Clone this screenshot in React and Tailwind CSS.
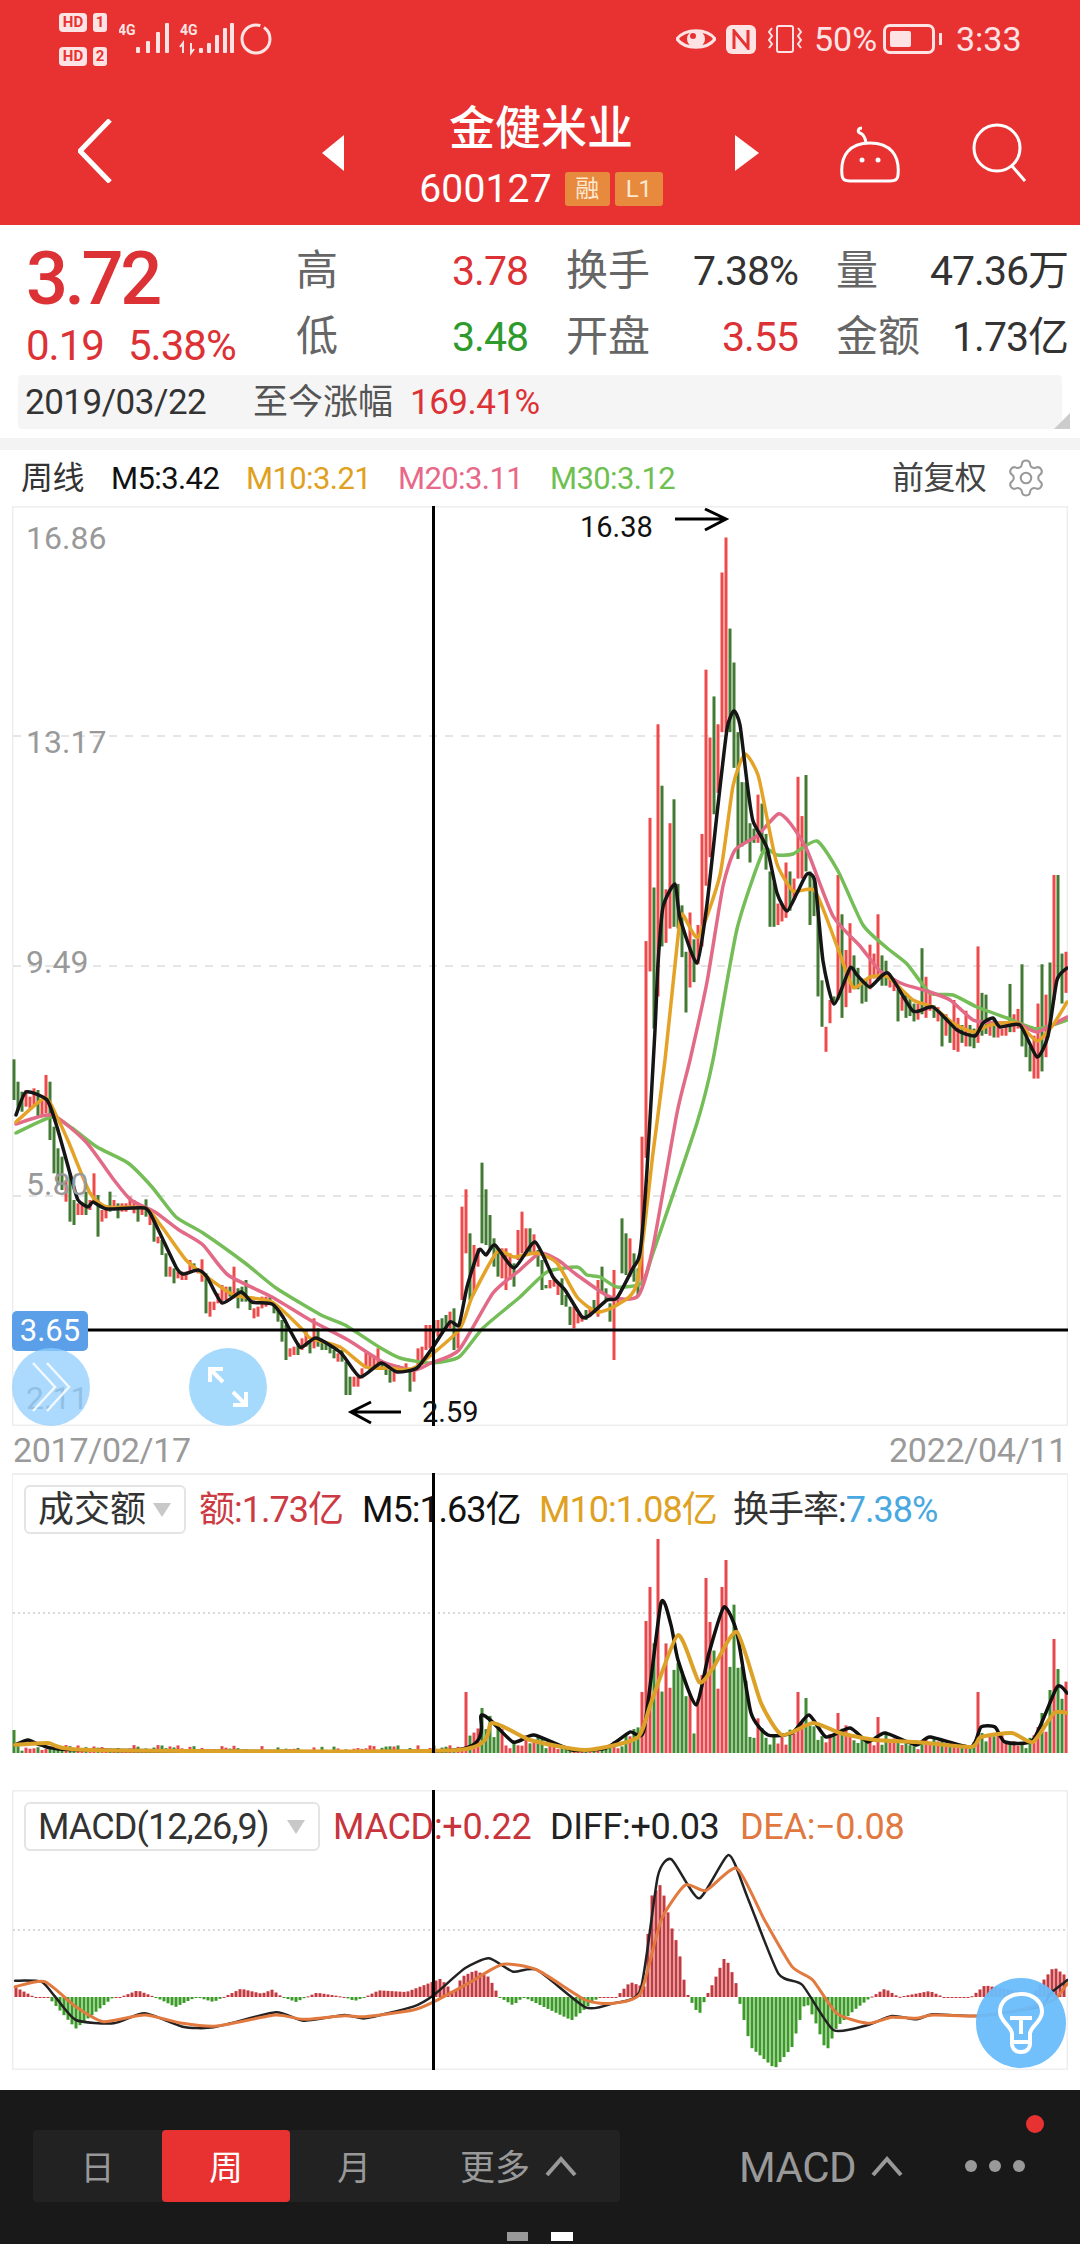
import { Settings } from 'lucide-react';

// candle data, read off the chart: colour + top-bottom, in crop units
const LEFT = 'G178-300 G245-330 G275-335 R270-320 R290-325 R265-315 G270-350 R300-345 R225-340 G245-420 G380-520 G445-555 G470-570 R540-605 G520-665 G600-675 R610-645 R610-645 G575-645 R600-630 R520-610 G585-710 R630-665 R615-655 G575-635 R600-630 G610-655 R610-635 R610-635 R590-625 R600-640 G610-665 R620-645 G598-650 R630-675 G650-725 R710-730 G720-765 G760-830 R800-830 G805-850 R815-835 R815-840 R815-840 R780-815 G790-815 R805-820 R778-845 G820-940 R905-950 R905-930 R880-910 R855-905 R860-900 G860-890 R800-895 G865-925 G860-905 G840-905 G890-930 R925-955 R920-950 R890-925 R890-920 G885-915 G915-940 G920-965 G960-1025 G975-1080 R1045-1070 R1040-1065 G1030-1065 R1015-1050 R990-1040 G1020-1060 R955-1045 G985-1040 G1025-1050 G1030-1050 G1035-1060 G1050-1075 R1060-1085 G1050-1085 G1085-1185 G1130-1185 R1130-1160 R1130-1160 R1105-1135 R1055-1105 R1065-1110 R1070-1105 R1045-1110 G1085-1110 G1105-1125 G1110-1148 R1115-1145 G1095-1115 R1100-1115 R1090-1115 G1110-1175 R1100-1145 R1045-1110 R1040-1095 R975-1050 R975-1045 G960-1000 R960-1010 G955-1000 G945-985 R935-985 G925-1050 R990-1045 R620-900 R568-760 G700-900 R735-880 R745-800 G488-730 G568-735 G645-750 G715-800 G745-830 R745-835 R745-870 R760-840 G790-860 R690-780';
const MID = 'R575-700 R625-695 G625-700 R643-700 G690-740 G720-810 G795-805 R780-805 R770-800 R790-825 G775-855 G825-860 G860-915 R860-925 R880-910 R885-905 G870-900 R860-890 G840-875 R780-890 G740-820 G805-845 G850-905 R750-1020 R840-855 G595-760 G640-765 R655-770 G700-785 G745-825 R350-790';
const RIGHT = 'R1235-1842 R890-1320 G1085-1480 R628-1390 G800-1250 R1090-1240 R905-1200 G838-1195 G1075-1200 G1135-1280 G1265-1435 R1155-1365 G1230-1350 R1190-1300 R935-1250 R475-1080 R665-1000 G550-880 R628-820 R203-650 R105-650 G360-650 G455-750 G650-1005 G790-970 G790-960 G905-1015 G920-960 R825-960 G850-985 G935-1035 G1040-1195 G1070-1195 R1130-1190 R1130-1180 R1015-1170 G1040-1150 R1060-1120 R775-1060 R885-1060 G770-1040 G1040-1190 G1060-1165 G1110-1390 G1345-1475 R1475-1545 R1400-1465 G1390-1410 R1050-1400 G1160-1450 R1260-1420 R1185-1380 G1275-1370 G1310-1370 G1340-1410 G1340-1405 R1245-1370 R1270-1340 R1160-1340 G1275-1360 G1290-1360 R1335-1365 R1340-1375 G1370-1460 R1390-1430 G1380-1450 G1395-1445 G1410-1460 R1410-1455 G1255-1440 R1335-1450 R1380-1430 G1415-1450 R1420-1460 G1440-1530 R1440-1500 G1460-1520 R1400-1540 R1450-1545 G1470-1520 R1430-1530 G1470-1530 G1480-1535 R1250-1520 G1380-1500 G1385-1495 R1460-1500 G1450-1505 R1470-1505 R1480-1500 R1470-1500 G1355-1490 R1440-1490 R1425-1480 G1300-1530 G1490-1560 G1530-1600 R1500-1620 R1410-1620 G1300-1600 R1385-1560 G1295-1480 R1050-1400 G1050-1340 G1270-1410 R1265-1380';

const parse = (str, off, k) =>
  str.split(' ').map((s) => {
    const [a, b] = s.slice(1).split('-').map(Number);
    return { c: s[0], top: off + a / k, bot: off + b / k };
  });

const candles = [...parse(LEFT, 1000, 3), ...parse(MID, 1020, 3), ...parse(RIGHT, 500, 2.8)].map((d, i) => ({ ...d, x: 14 + 4 * i }));

const MA5 = [[16,1115],[26,1092],[47,1100],[57,1127],[71,1177],[78,1200],[88,1207],[93,1202],[107,1209],[145,1208],[155,1223],[176,1267],[183,1274],[198,1270],[207,1277],[222,1303],[241,1292],[252,1302],[272,1304],[283,1317],[300,1347],[316,1338],[341,1353],[360,1377],[381,1363],[397,1372],[417,1368],[433,1347],[450,1322],[459,1325],[467,1287],[479,1250],[486,1255],[495,1245],[514,1268],[535,1242],[553,1277],[565,1290],[582,1317],[590,1315],[607,1300],[617,1298],[633,1268],[640,1253],[647,1170],[655,1030],[658,964],[663,907],[675,884],[680,918],[697,963],[707,904],[717,814],[727,729],[734,711],[740,725],[747,782],[753,821],[767,848],[777,893],[787,911],[797,893],[807,874],[815,882],[823,961],[834,1004],[850,968],[857,975],[870,987],[888,973],[913,1011],[933,1007],[957,1030],[975,1036],[983,1023],[993,1018],[1000,1027],[1020,1025],[1037,1057],[1048,1036],[1057,980],[1067,968]];
const MA10 = [[16,1122],[45,1098],[57,1117],[69,1143],[90,1193],[107,1207],[145,1208],[162,1227],[186,1260],[207,1277],[234,1295],[272,1302],[303,1330],[310,1338],[340,1347],[366,1367],[390,1368],[414,1368],[459,1330],[472,1297],[497,1252],[514,1257],[537,1253],[557,1263],[577,1297],[597,1312],[617,1305],[637,1283],[653,1153],[665,1060],[677,946],[682,914],[698,937],[720,875],[733,786],[745,754],[758,775],[767,818],[777,864],[793,891],[815,891],[837,946],[853,987],[870,977],[888,977],[913,1000],[933,1007],[953,1023],[973,1032],[990,1025],[1017,1023],[1037,1041],[1053,1025],[1067,1002]];
const MA20 = [[16,1124],[52,1115],[86,1142],[114,1180],[131,1200],[155,1212],[179,1230],[203,1245],[228,1275],[272,1297],[310,1320],[348,1340],[383,1362],[414,1370],[431,1363],[459,1350],[493,1293],[520,1270],[540,1253],[558,1260],[577,1275],[610,1297],[638,1296],[653,1247],[677,1113],[690,1060],[707,982],[723,886],[735,850],[757,836],[778,814],[790,823],[807,850],[833,916],[860,946],[880,971],[903,984],[927,991],[950,1000],[973,1020],[993,1023],[1017,1023],[1037,1032],[1067,1017]];
const MA30 = [[16,1133],[52,1117],[72,1128],[97,1147],[128,1163],[152,1187],[176,1217],[203,1233],[245,1263],[276,1288],[321,1315],[345,1325],[379,1347],[400,1358],[431,1363],[459,1357],[483,1328],[520,1297],[547,1272],[577,1267],[587,1275],[600,1277],[617,1287],[642,1283],[653,1253],[697,1123],[713,1060],[737,929],[763,852],[777,855],[793,854],[817,841],[838,871],[863,925],[887,948],[907,964],[930,993],[953,995],[977,1007],[1007,1018],[1037,1029],[1067,1020]];

const VOL5 = [[15,1745],[28,1740],[41,1745],[83,1750],[455,1750],[482,1715],[513,1742],[534,1735],[572,1750],[606,1748],[630,1732],[644,1730],[661,1603],[671,1625],[678,1660],[696,1705],[709,1653],[724,1607],[737,1633],[751,1713],[768,1735],[792,1733],[809,1715],[826,1737],[850,1728],[868,1742],[885,1733],[916,1745],[930,1737],[971,1747],[981,1727],[995,1727],[1005,1742],[1033,1740],[1057,1687],[1067,1693]];
const VOL10 = [[15,1745],[48,1743],[90,1750],[458,1750],[492,1723],[530,1740],[585,1750],[637,1738],[651,1703],[678,1635],[699,1682],[713,1668],[737,1632],[761,1703],[782,1735],[813,1723],[840,1733],[875,1740],[916,1742],[971,1747],[981,1737],[1012,1733],[1033,1742],[1054,1713],[1067,1713]];
const VOL_PEAKS = [[658,1539],[650,1587],[646,1621],[642,1692],[706,1578],[726,1560],[722,1587],[710,1622],[466,1692],[482,1708],[798,1692],[806,1698],[838,1713],[878,1717],[978,1692],[1054,1639],[1058,1669],[1050,1690],[1042,1713],[14,1730]];

// macd envelope, value above/below the zero line, x in page px
const mx = (v) => v / 1.452;
const my = (v) => 1770 + v / 3;
const HIST = [[22,650],[50,680],[70,680],[110,775],[165,680],[175,680],[200,660],[225,680],[255,710],[285,680],[310,695],[325,680],[350,655],[380,670],[395,658],[410,680],[430,695],[445,680],[460,667],[500,680],[515,692],[530,680],[550,660],[590,665],[640,625],[660,670],[670,620],[690,600],[710,620],[725,680],[745,705],[760,680],[790,710],[830,750],[870,680],[895,680],[915,635],[935,650],[945,380],[960,340],[975,470],[985,530],[995,650],[1000,680],[1015,735],[1025,680],[1035,640],[1053,558],[1068,630],[1072,680],[1090,830],[1125,895],[1150,830],[1170,690],[1185,760],[1200,845],[1215,770],[1240,720],[1265,680],[1285,655],[1305,680],[1350,662],[1370,680],[1410,680],[1430,645],[1500,670],[1530,590],[1550,620]];
const DIFF = [[22,632],[60,635],[80,680],[110,750],[165,760],[210,730],[265,770],[310,772],[400,727],[440,752],[500,735],[530,745],[600,710],[630,675],[675,595],[710,565],[745,605],[780,600],[850,712],[890,700],[930,660],[955,320],[975,268],[1015,385],[1058,255],[1085,380],[1130,610],[1165,645],[1210,780],[1260,765],[1295,738],[1330,748],[1355,733],[1420,738],[1510,710],[1525,670],[1550,630]];
const DEA = [[22,650],[65,635],[110,710],[150,755],[210,735],[265,760],[315,768],[400,735],[440,748],[500,737],[530,740],[600,720],[630,695],[680,640],[730,583],[780,600],[850,690],[890,700],[930,670],[960,450],[995,345],[1025,362],[1070,295],[1110,450],[1150,590],[1180,630],[1215,730],[1260,760],[1295,742],[1330,745],[1355,735],[1420,738],[1480,720],[1530,690],[1550,640]];

const lerp = (pts, x) => {
  for (let i = 1; i < pts.length; i++) {
    if (x <= pts[i][0]) {
      const [x0, y0] = pts[i - 1];
      const [x1, y1] = pts[i];
      return y0 + ((y1 - y0) * (x - x0)) / (x1 - x0);
    }
  }
  return pts[pts.length - 1][1];
};

// catmull-rom so the averages don't look like polylines
const smooth = (pts) => {
  let d = `M${pts[0][0]} ${pts[0][1]}`;
  for (let i = 0; i < pts.length - 1; i++) {
    const p0 = pts[i - 1] || pts[i];
    const p1 = pts[i];
    const p2 = pts[i + 1];
    const p3 = pts[i + 2] || p2;
    const t = 0.1;
    d += ` C${p1[0] + (p2[0] - p0[0]) * t} ${p1[1] + (p2[1] - p0[1]) * t} ${p2[0] - (p3[0] - p1[0]) * t} ${p2[1] - (p3[1] - p1[1]) * t} ${p2[0]} ${p2[1]}`;
  }
  return d;
};

const noise = (i) => {
  const v = Math.sin(i * 12.9898) * 43758.5453;
  return v - Math.floor(v);
};

const volumes = candles.map((d, i) => {
  const peak = VOL_PEAKS.find((p) => Math.abs(p[0] - d.x) < 2);
  let top;
  if (peak) top = peak[1];
  else if (d.x < 455) top = 1753 - 2 - noise(i) * 6;
  else top = 1753 - (1753 - lerp(VOL5, d.x)) * (0.35 + noise(i) * 0.85);
  return { x: d.x, top, c: d.c };
});

const bars = [];
for (let x = 16; x < 1067; x += 4) bars.push({ x, v: 680 - lerp(HIST, x * 1.452) });

function Candles() {
  return candles.map((d) => (
    <rect key={d.x} x={d.x - 1.5} y={d.top} width={3} height={d.bot - d.top} fill={d.c === 'R' ? '#ee4a4a' : '#437a33'} />
  ));
}

function Line({ pts, color, w = 3.5 }) {
  return <path d={smooth(pts)} fill="none" stroke={color} strokeWidth={w} strokeLinejoin="round" strokeLinecap="round" />;
}

function Caret({ className }) {
  return (
    <svg className={className} viewBox="0 0 34 24" fill="none" stroke="#999" strokeWidth="4">
      <polyline points="3,21 17,5 31,21" />
    </svg>
  );
}

function StatusBar() {
  return (
    <div className="h-[78px] flex items-center text-[#fde3e3]">
      <div className="ml-[59px] flex flex-col gap-[15px]">
        {['1', '2'].map((n) => (
          <div key={n} className="flex gap-[6px] text-[#e83232] text-[15px] font-bold leading-[19px]">
            <span className="w-[28px] h-[19px] bg-[#fde3e3] rounded-[4px] text-center">HD</span>
            <span className="w-[14px] h-[19px] bg-[#fde3e3] rounded-[3px] text-center">{n}</span>
          </div>
        ))}
      </div>
      <svg className="ml-[12px]" width="165" height="50" viewBox="119 16 165 50" fill="#fde3e3">
        <text x="118" y="37" fontSize="14" fontWeight="700" fontFamily="Roboto">4G</text>
        {[[136, 6], [146, 12], [156, 21], [165, 30]].map(([x, h]) => <rect key={x} x={x} y={55 - h} width="4" height={h} rx="1" />)}
        <text x="180" y="37" fontSize="14" fontWeight="700" fontFamily="Roboto">4G</text>
        <path d="M183 55v-10l-3 4M191 45v10l3-4" fill="none" stroke="#fde3e3" strokeWidth="2" />
        {[[198, 5], [206, 10], [214, 18], [222, 25]].map(([x, h]) => <rect key={x} x={x + 1} y={55 - h} width="4" height={h} rx="1" />)}
        <rect x="230" y="25" width="4" height="30" rx="1" />
        <circle cx="256" cy="41" r="14" fill="none" stroke="#fde3e3" strokeWidth="3" strokeDasharray="70 4 14 2" />
      </svg>
      <svg className="ml-[392px]" width="40" height="30" viewBox="0 0 40 30">
        <path d="M1 15C9 4 31 4 39 15C31 26 9 26 1 15Z" fill="none" stroke="#fde3e3" strokeWidth="3" />
        <circle cx="20" cy="15" r="9" fill="#fde3e3" />
        <circle cx="17" cy="12" r="3" fill="#e83232" />
      </svg>
      <div className="ml-[10px] w-[30px] h-[29px] bg-[#fde3e3] rounded-[6px] flex items-center justify-center">
        <svg width="20" height="21" viewBox="0 0 20 21" fill="none" stroke="#e83232" strokeWidth="3"><path d="M3 20V2L17 19V1" /></svg>
      </div>
      <svg className="ml-[10px]" width="38" height="30" viewBox="0 0 38 30" fill="none" stroke="#fde3e3" strokeWidth="2">
        <rect x="11" y="2" width="16" height="26" rx="2" />
        <path d="M6 4l-3 4 3 4-3 4 3 4-3 4M32 4l3 4-3 4 3 4-3 4 3 4" />
      </svg>
      <span className="ml-[10px] text-[34px] leading-none w-[62px]">50%</span>
      <div className="ml-[7px] w-[52px] h-[30px] border-[3px] border-[#fde3e3] rounded-[7px] p-[4px]">
        <div className="w-[21px] h-full bg-[#fde3e3] rounded-[2px]" />
      </div>
      <div className="ml-[4px] w-[3px] h-[12px] bg-[#fde3e3]" />
      <span className="ml-[14px] text-[34px] leading-none">3:33</span>
    </div>
  );
}

function NavBar() {
  return (
    <div className="flex items-start text-white">
      <svg className="ml-[78px] mt-[41px]" width="34" height="64" viewBox="0 0 34 64" fill="none" stroke="#fff" strokeWidth="5">
        <polyline points="32,1 2,32 32,63" />
      </svg>
      <svg className="ml-[210px] mt-[57px]" width="22" height="36" viewBox="0 0 22 36" fill="#fff"><path d="M22 0V36L0 18Z" /></svg>
      <div className="ml-[24px] w-[346px] flex flex-col items-center">
        <div className="mt-[25px] h-[50px] text-[46px] leading-[50px] font-medium">金健米业</div>
        <div className="mt-[18px] flex items-center h-[36px]">
          <span className="text-[39px] leading-none tracking-[0.2px]">600127</span>
          <span className="ml-[13px] w-[45px] h-[34px] bg-[#e88a3e] rounded-[3px] text-[24px] leading-[34px] text-center text-[#fde8d0]">融</span>
          <span className="ml-[5px] w-[48px] h-[34px] bg-[#e88a3e] rounded-[3px] text-[24px] leading-[34px] text-center text-[#fde8d0]">L1</span>
        </div>
      </div>
      <svg className="ml-[21px] mt-[57px]" width="24" height="36" viewBox="0 0 24 36" fill="#fff"><path d="M0 0V36L24 18Z" /></svg>
      <svg className="ml-[81px] mt-[47px]" width="60" height="58" viewBox="0 0 60 58" fill="none" stroke="#fff" strokeWidth="3">
        <path d="M22 3c-4 0-5 4-2 5c3 1 5 3 6 10" />
        <path d="M2 50C0 30 10 18 30 18C50 18 60 30 58 50C58 55 54 56 50 56H10C6 56 2 55 2 50Z" />
        <circle cx="22" cy="35" r="2.5" fill="#fff" stroke="none" />
        <circle cx="38" cy="35" r="2.5" fill="#fff" stroke="none" />
      </svg>
      <svg className="ml-[71px] mt-[45px]" width="58" height="60" viewBox="0 0 58 60" fill="none" stroke="#fff" strokeWidth="3">
        <ellipse cx="26" cy="25" rx="23" ry="23" />
        <path d="M41 43L54 58" />
      </svg>
    </div>
  );
}

function Cell({ label, value, color }) {
  return (
    <div className="h-[66px] flex items-center justify-between">
      <span className="text-[42px] leading-none text-[#666]">{label}</span>
      <span className={`text-[41px] leading-none tracking-[-1px] ${color}`}>{value}</span>
    </div>
  );
}

function Quote() {
  return (
    <div className="h-[213px] pt-[10px] flex flex-col">
      <div className="flex h-[140px]">
        <div className="w-[296px] pl-[26px]">
          <div className="mt-[8px] h-[72px] text-[#dc3236] text-[74px] leading-[72px] font-medium tracking-[-3.5px]">3.72</div>
          <div className="mt-[10px] flex text-[#dc3236] text-[42px] leading-none tracking-[-1px]">
            <span className="w-[102px]">0.19</span>
            <span>5.38%</span>
          </div>
        </div>
        <div className="w-[772px] grid grid-cols-3 gap-x-[38px] content-start pt-[3px]">
          <Cell label="高" value="3.78" color="text-[#dc3236]" />
          <Cell label="换手" value="7.38%" color="text-[#333]" />
          <Cell label="量" value="47.36万" color="text-[#333]" />
          <Cell label="低" value="3.48" color="text-[#2e9a2e]" />
          <Cell label="开盘" value="3.55" color="text-[#dc3236]" />
          <Cell label="金额" value="1.73亿" color="text-[#333]" />
        </div>
      </div>
      <div className="relative ml-[18px] w-[1044px] h-[54px] bg-[#f5f5f5] rounded-[4px] flex items-center text-[35px] leading-none">
        <span className="ml-[7px] w-[228px] text-[#333] tracking-[-0.5px]">2019/03/22</span>
        <span className="w-[157px] text-[#555]">至今涨幅</span>
        <span className="text-[#dc3236] tracking-[-0.5px]">169.41%</span>
        <svg className="absolute right-[-8px] bottom-0" width="16" height="16" viewBox="0 0 16 16" fill="#ccc"><path d="M16 0V16H0Z" /></svg>
      </div>
    </div>
  );
}

function MainLegend() {
  return (
    <div className="h-[56px] flex items-center text-[31px] leading-none tracking-[-0.6px]">
      <span className="ml-[21px] w-[90px] text-[#333] text-[32px]">周线</span>
      <span className="w-[135px] text-[#111]">M5:3.42</span>
      <span className="w-[152px] text-[#e0a020]">M10:3.21</span>
      <span className="w-[152px] text-[#e8688a]">M20:3.11</span>
      <span className="w-[342px] text-[#6ec050]">M30:3.12</span>
      <span className="w-[113px] text-[#444] text-[32px]">前复权</span>
      <Settings size={42} strokeWidth={1.2} color="#999" />
    </div>
  );
}

function AxisLabel({ className, children }) {
  return <span className={`absolute left-[14px] text-[#999] text-[32px] leading-none ${className}`}>{children}</span>;
}

function MainChart() {
  return (
    <div className="relative ml-[12px] w-[1056px] h-[920px]">
      <svg className="block" width="1056" height="920" viewBox="12 506 1056 920">
        <rect x="12.5" y="506.5" width="1055" height="919" fill="none" stroke="#eee" strokeWidth="2" />
        {[736, 966, 1196].map((y) => <line key={y} x1="13" x2="1067" y1={y} y2={y} stroke="#ddd" strokeWidth="1.5" strokeDasharray="8 8" />)}
        <Candles />
        <Line pts={MA30} color="#74bd57" />
        <Line pts={MA20} color="#e26a86" />
        <Line pts={MA10} color="#e4a226" />
        <Line pts={MA5} color="#161616" />
        <line x1="433.5" x2="433.5" y1="506" y2="1426" stroke="#000" strokeWidth="3" />
        <line x1="88" x2="1068" y1="1330" y2="1330" stroke="#000" strokeWidth="3" />
        <path d="M675 519H726M705 509L726 519L705 530" fill="none" stroke="#000" strokeWidth="3" />
        <path d="M401 1412H351M371 1402L351 1412L371 1423" fill="none" stroke="#000" strokeWidth="3" />
      </svg>
      <AxisLabel className="top-[16px]">16.86</AxisLabel>
      <AxisLabel className="top-[220px]">13.17</AxisLabel>
      <AxisLabel className="top-[440px]">9.49</AxisLabel>
      <AxisLabel className="top-[662px]">5.80</AxisLabel>
      <AxisLabel className="top-[876px]">2.11</AxisLabel>
      <span className="absolute left-[568px] top-[7px] text-[29px] leading-[28px] text-[#111]">16.38</span>
      <span className="absolute left-[410px] top-[892px] text-[29px] leading-[28px] text-[#111]">2.59</span>
      <div className="absolute left-0 top-[805px] w-[76px] h-[40px] bg-[#5a9fe8] rounded-[5px] text-white text-[31px] leading-[40px] text-center">3.65</div>
      <div className="absolute left-0 top-[842px] w-[78px] h-[78px] rounded-full bg-[#8fcdfd]/75 flex items-center justify-center">
        <svg width="44" height="52" viewBox="0 0 44 52" fill="none" stroke="#fff" strokeWidth="2.5" opacity="0.85">
          <path d="M4 2L26 26L4 50M18 2L40 26L18 50" />
        </svg>
      </div>
      <div className="absolute left-[177px] top-[842px] w-[78px] h-[78px] rounded-full bg-[#a6dafd] flex items-center justify-center">
        <svg width="42" height="42" viewBox="0 0 42 42" fill="none" stroke="#fff" strokeWidth="4">
          <path d="M3 16V3H16M3 3L16 16M39 26V39H26M39 39L26 26" />
        </svg>
      </div>
    </div>
  );
}

function DateRow() {
  return (
    <div className="h-[47px] px-[13px] flex items-center justify-between text-[#9a9a9a] text-[34px] leading-none tracking-[-0.3px]">
      <span>2017/02/17</span>
      <span>2022/04/11</span>
    </div>
  );
}

function Dropdown({ label, className }) {
  return (
    <div className={`relative shrink-0 h-[49px] border-2 border-[#e4e4e4] rounded-[6px] flex items-center text-[#333] leading-none ${className}`}>
      <span className="ml-[12px]">{label}</span>
      <svg className="absolute right-[13px] top-[16px]" width="18" height="14" viewBox="0 0 18 14" fill="#c8c8c8"><path d="M0 0H18L9 14Z" /></svg>
    </div>
  );
}

function VolumePanel() {
  return (
    <div className="relative ml-[12px] w-[1056px] h-[280px]">
      <svg className="block" width="1056" height="280" viewBox="12 1473 1056 280">
        <path d="M12 1754V1474H1068V1754" fill="none" stroke="#eee" strokeWidth="2" />
        <line x1="13" x2="1067" y1="1613" y2="1613" stroke="#ccc" strokeWidth="1.5" strokeDasharray="2 3" />
        {volumes.map((d) => (
          <rect key={d.x} x={d.x - 1.5} y={d.top} width={3} height={1753 - d.top} fill={d.c === 'R' ? '#e8474c' : '#3f8a32'} />
        ))}
        <Line pts={VOL5} color="#111" />
        <Line pts={VOL10} color="#dca227" w={4} />
        <line x1="433.5" x2="433.5" y1="1473" y2="1753" stroke="#000" strokeWidth="3" />
      </svg>
      <div className="absolute left-[12px] top-[12px] w-full flex items-center text-[36px] leading-none tracking-[-1px]">
        <Dropdown label="成交额" className="w-[162px] tracking-normal" />
        <span className="ml-[13px] w-[163px] text-[#cc3b44]">额:1.73亿</span>
        <span className="w-[177px] text-[#111]">M5:1.63亿</span>
        <span className="w-[194px] text-[#dfa122]">M10:1.08亿</span>
        <span className="text-[#333]">换手率:<span className="text-[#4aa8e0]">7.38%</span></span>
      </div>
    </div>
  );
}

function MacdPanel() {
  return (
    <div className="relative ml-[12px] mt-[37px] w-[1056px] h-[280px]">
      <svg className="block" width="1056" height="280" viewBox="12 1790 1056 280">
        <rect x="12.5" y="1790.5" width="1055" height="279" fill="none" stroke="#eee" strokeWidth="2" />
        <line x1="13" x2="1067" y1="1930" y2="1930" stroke="#ccc" strokeWidth="1.5" strokeDasharray="2 3" />
        {bars.map((b) => (
          <rect key={b.x} x={b.x - 1.5} y={b.v > 0 ? 1997 - b.v / 3 : 1997} width={3} height={Math.max(Math.abs(b.v) / 3, 1)} fill={b.v >= 0 ? '#c2393f' : '#3b9b26'} />
        ))}
        <Line pts={DIFF.map(([x, y]) => [mx(x), my(y)])} color="#222" w={2.5} />
        <Line pts={DEA.map(([x, y]) => [mx(x), my(y)])} color="#e2793f" w={3} />
        <line x1="433.5" x2="433.5" y1="1790" y2="2070" stroke="#000" strokeWidth="3" />
      </svg>
      <div className="absolute left-[12px] top-[12px] w-full flex items-center text-[36px] leading-none tracking-[-0.3px]">
        <Dropdown label="MACD(12,26,9)" className="w-[296px] tracking-[-0.9px]" />
        <span className="ml-[13px] w-[217px] text-[#c8343c]">MACD:+0.22</span>
        <span className="w-[190px] text-[#222]">DIFF:+0.03</span>
        <span className="text-[#e07840]">DEA:−0.08</span>
      </div>
      <div className="absolute left-[964px] top-[188px] w-[90px] h-[90px] rounded-full bg-[#69bcfb]/95 flex items-center justify-center">
        <svg width="46" height="62" viewBox="0 0 46 62" fill="none" stroke="#fff" strokeWidth="4">
          <path d="M14 42C14 34 2 30 2 20C2 9 11 2 23 2C35 2 44 9 44 20C44 30 32 34 32 42V52C32 55 30 60 23 60C16 60 14 55 14 52Z" />
          <path d="M12 26H34M23 26V42M14 50H32" />
        </svg>
      </div>
    </div>
  );
}

function Footer() {
  return (
    <div className="mt-[20px] flex-1 bg-[#191919] relative">
      <div className="mt-[40px] flex items-center h-[72px]">
        <div className="ml-[33px] w-[587px] h-[72px] bg-[#222] rounded-[4px] flex items-center text-[#999] text-[34px] leading-none">
          <span className="w-[129px] pt-[4px] text-center">日</span>
          <span className="w-[128px] h-[72px] bg-[#e83232] rounded-[4px] text-white leading-[76px] text-center">周</span>
          <span className="w-[128px] pt-[4px] text-center">月</span>
          <span className="ml-[42px] pt-[4px] text-[35px]">更多</span>
          <Caret className="ml-[14px] w-[34px] h-[24px]" />
        </div>
        <span className="ml-[119px] pt-[3px] text-[#999] text-[42px] leading-none tracking-[-0.5px]">MACD</span>
        <Caret className="ml-[14px] w-[34px] h-[24px]" />
        <div className="ml-[61px] flex gap-[12px]">
          <div className="w-[12px] h-[12px] rounded-full bg-[#999]" />
          <div className="w-[12px] h-[12px] rounded-full bg-[#999]" />
          <div className="w-[12px] h-[12px] rounded-full bg-[#999]" />
        </div>
      </div>
      <div className="absolute left-[1026px] top-[25px] w-[18px] h-[18px] rounded-full bg-[#e83232]" />
      <div className="absolute left-[507px] bottom-[3px] flex gap-[23px]">
        <div className="w-[21px] h-[9px] bg-[#999]" />
        <div className="w-[22px] h-[9px] bg-white" />
      </div>
    </div>
  );
}

export default function App() {
  return (
    <div className="w-[1080px] h-[2244px] bg-white flex flex-col overflow-hidden font-[Roboto,'Noto_Sans_CJK_SC',sans-serif]">
      <div className="h-[225px] bg-[#e83232] shrink-0">
        <StatusBar />
        <NavBar />
      </div>
      <Quote />
      <div className="h-[12px] bg-[#f3f3f3]" />
      <MainLegend />
      <MainChart />
      <DateRow />
      <VolumePanel />
      <MacdPanel />
      <Footer />
    </div>
  );
}
